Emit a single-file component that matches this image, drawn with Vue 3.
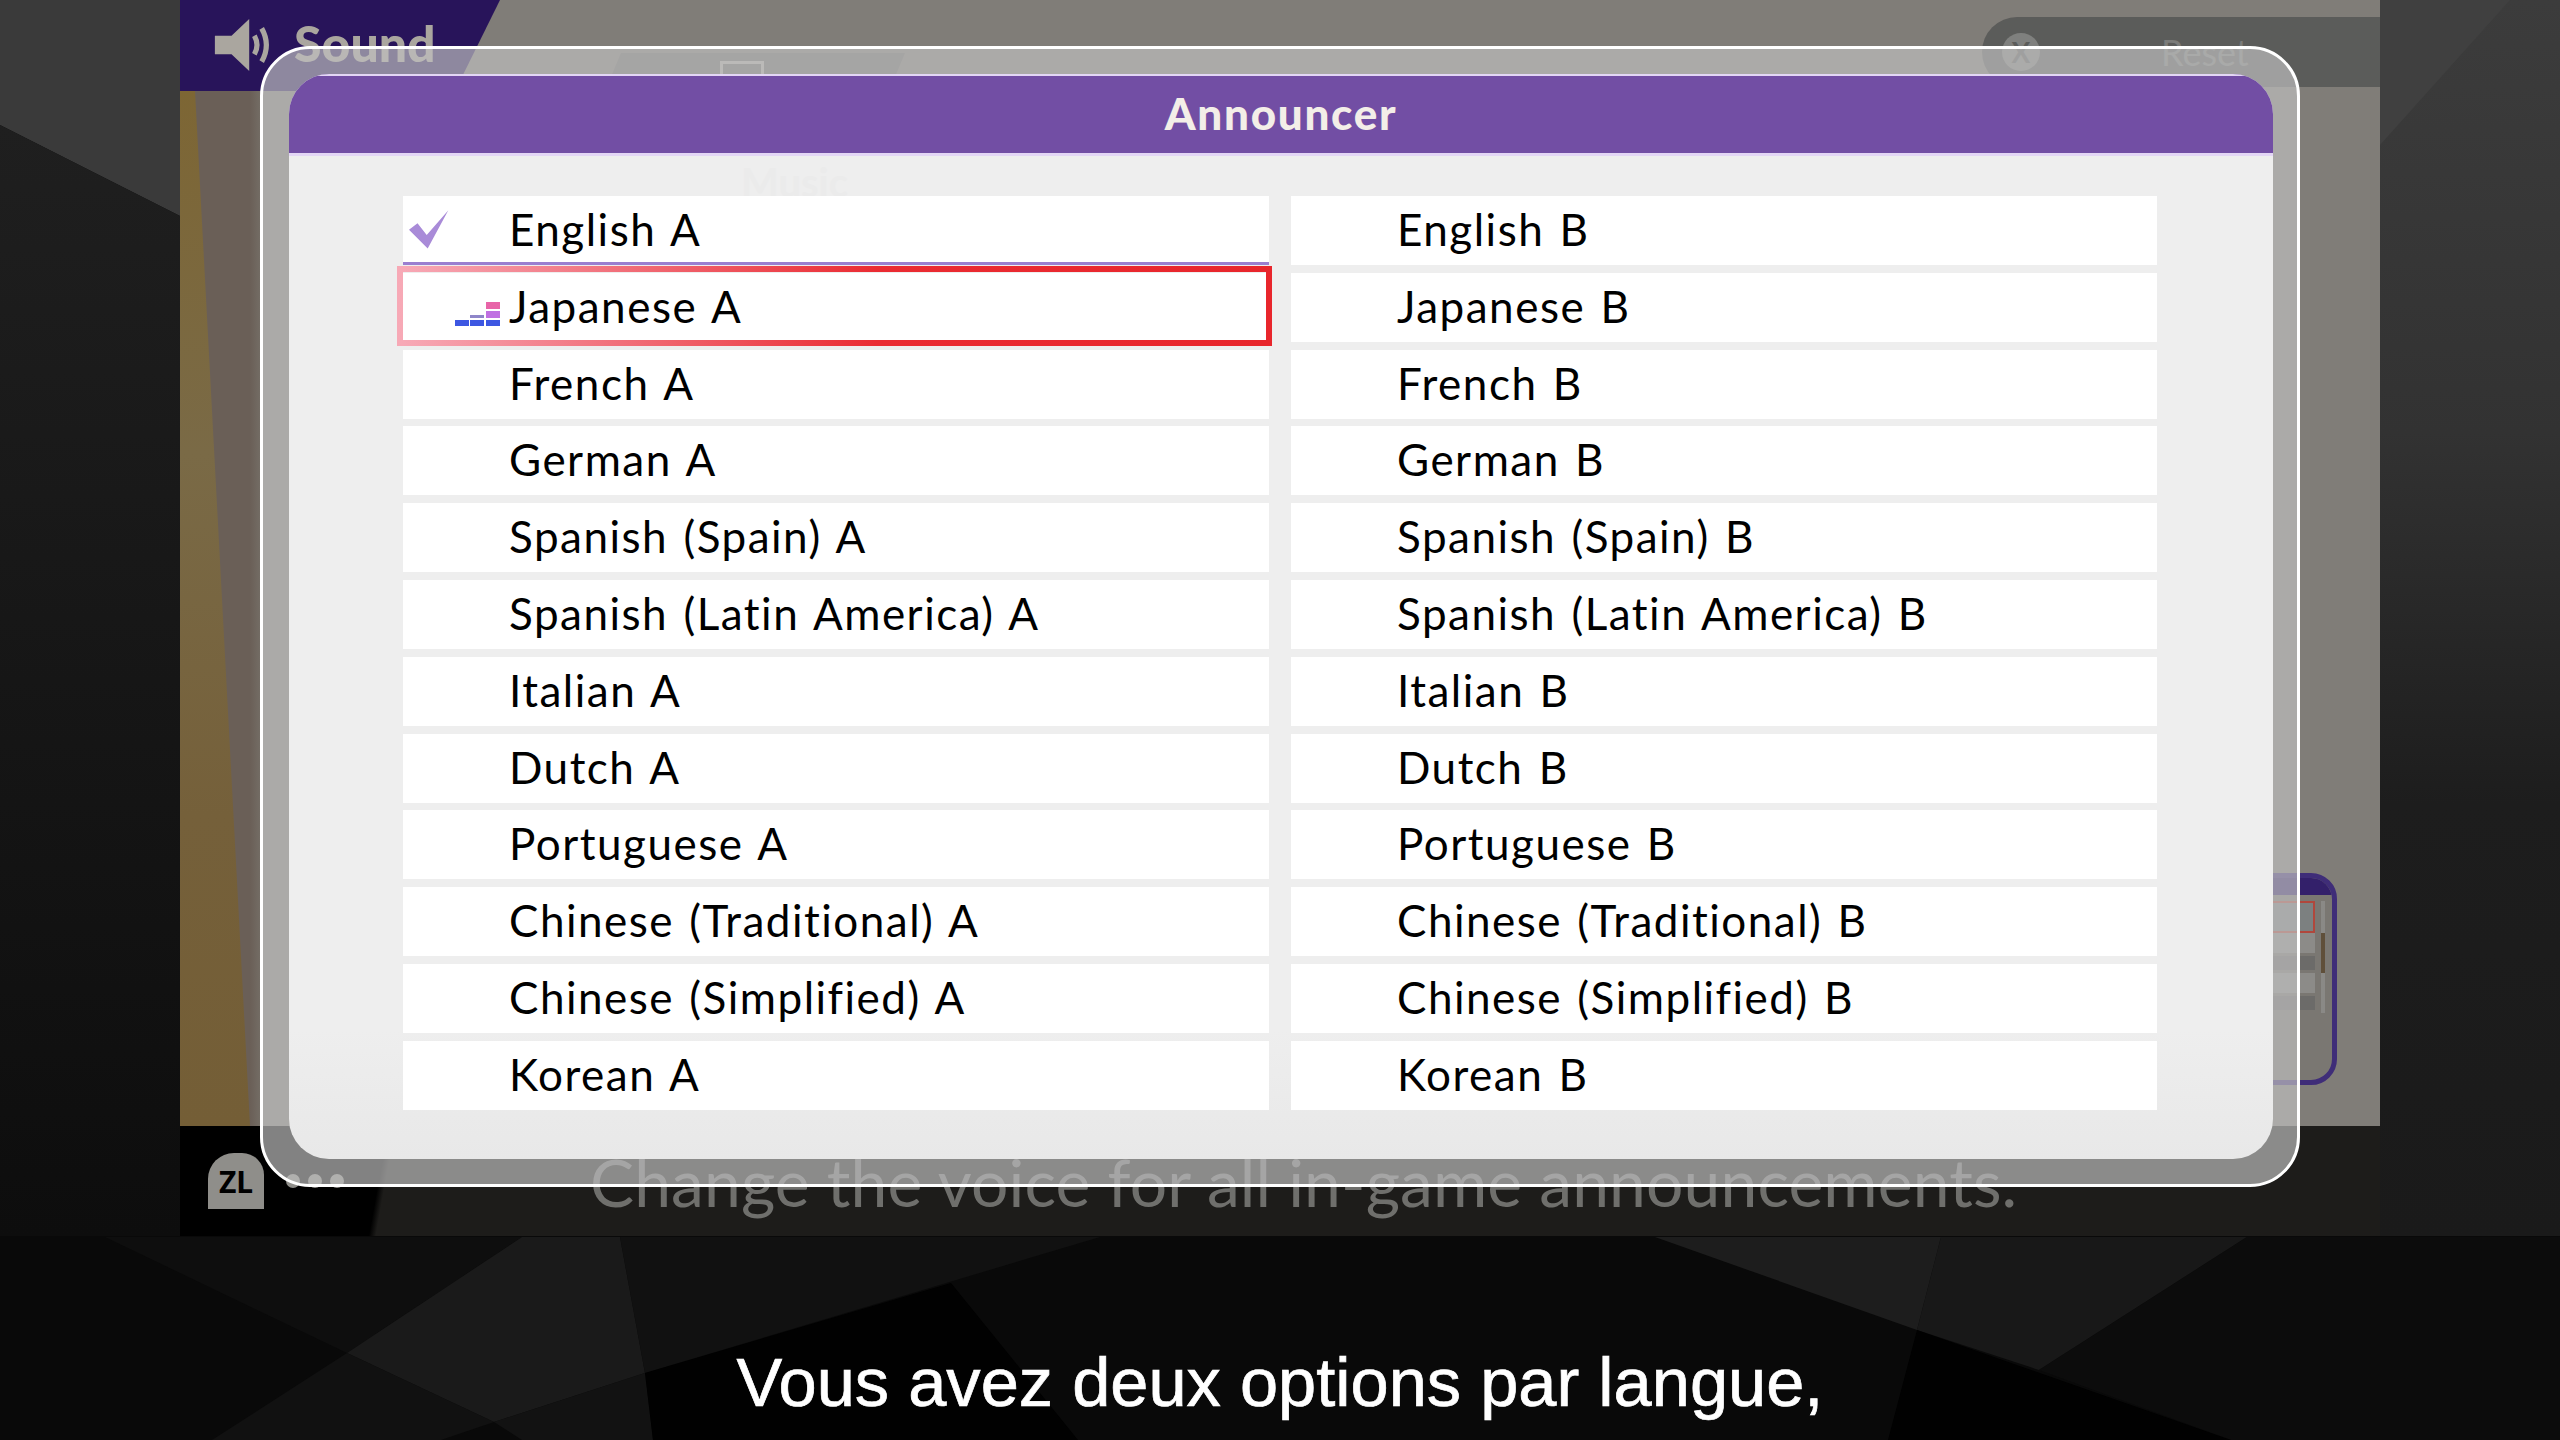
<template>
  <div class="page">
    <svg class="backdrop" viewBox="0 0 2560 1440" aria-hidden="true">
      <defs>
        <linearGradient id="leftFade" x1="0" y1="0" x2="0" y2="1">
          <stop offset="0" stop-color="#1f1f1f" />
          <stop offset="1" stop-color="#0d0d0d" />
        </linearGradient>
        <linearGradient id="rightFade" x1="0" y1="0" x2="0" y2="1">
          <stop offset="0" stop-color="#3c3c3c" />
          <stop offset="0.35" stop-color="#323232" />
          <stop offset="0.65" stop-color="#1d1d1d" />
          <stop offset="1" stop-color="#1a1a1a" />
        </linearGradient>
      </defs>
      <rect width="2560" height="1440" fill="#090909" />
      <polygon points="0,0 180,0 180,216 0,125" fill="#3a3a3a" />
      <polygon points="0,125 180,216 180,1236 0,1236" fill="url(#leftFade)" />
      <rect x="2380" y="0" width="180" height="1236" fill="url(#rightFade)" />
      <polygon points="2380,0 2510,0 2380,145" fill="#404040" />
      <!-- bottom facets -->
      <polygon points="105,1237 522,1237 347,1353" fill="#0e0e0e" />
      <polygon points="522,1237 620,1237 645,1373 494,1422 347,1353" fill="#1a1a1a" />
      <polygon points="620,1237 1100,1237 645,1373" fill="#111111" />
      <polygon points="347,1353 494,1422 441,1440 212,1440" fill="#111111" />
      <polygon points="494,1422 645,1373 653,1440 522,1440" fill="#121212" />
      <polygon points="645,1373 951,1283 1078,1440 653,1440" fill="#010101" />
      <polygon points="1655,1237 1941,1237 1917,1330" fill="#1d1d1d" />
      <polygon points="1941,1237 2247,1237 2039,1370 1917,1330" fill="#181818" />
      <polygon points="2247,1237 2560,1237 2560,1440 2231,1440 2039,1370" fill="#0c0c0c" />
      <polygon points="1917,1330 2231,1440 1888,1440" fill="#010101" />
    </svg>

    <div class="screen">
      <header class="top">
        <div class="brand">
          <svg class="speaker" viewBox="0 0 56 50">
            <path d="M0 16h16L33 0v50L16 34H0z" />
            <path d="M38 16q5 9 0 18M45 9q9 16 0 32" class="waves" />
          </svg>
          <span>Sound</span>
        </div>
        <div class="ghost-tab"><i></i></div>
        <div class="reset">
          <span class="x-button">X</span>
          <span class="reset-label">Reset</span>
        </div>
      </header>

      <div class="stage">
        <div class="wood"></div>
        <div class="mini">
          <div class="mini-head"></div>
          <div class="mini-body">
            <div class="mini-rows">
              <div class="mini-row active"></div>
              <div class="mini-row"></div>
              <div class="mini-row shade"></div>
              <div class="mini-row"></div>
              <div class="mini-row shade"></div>
            </div>
            <div class="mini-scroll"><i></i></div>
          </div>
        </div>
      </div>

      <footer class="bottom">
        <div class="zl">ZL</div>
        <div class="dots"><i></i><i></i><i></i></div>
        <p class="hint">Change the voice for all in-game announcements.</p>
      </footer>
    </div>

    <p class="caption">Vous avez deux options par langue,</p>

    <div class="dialog">
      <div class="panel">
        <h1 class="title">Announcer</h1>
        <div class="ghost-label">Music</div>
        <div class="list">
          <div
            v-for="item in items"
            :key="item.label"
            class="row"
            :class="{ checked: item.checked, focused: item.focused }"
          >
            <div class="mark">
              <svg v-if="item.checked" class="check" viewBox="0 0 122 118">
                <path d="M0 60L26 40 54 76 120 0 57 117z" />
              </svg>
              <svg v-if="item.focused" class="bars" viewBox="0 0 45 24">
                <rect x="0" y="18" width="14" height="6" fill="#3d57e2" />
                <rect x="15" y="18" width="14" height="6" fill="#3d57e2" />
                <rect x="31" y="18" width="14" height="6" fill="#3d57e2" />
                <rect x="15" y="13" width="14" height="3" fill="#8f86c9" />
                <rect x="31" y="9" width="14" height="7" fill="#c070e2" />
                <rect x="31" y="0" width="14" height="7" fill="#e864a8" />
              </svg>
            </div>
            <span class="label">{{ item.label }}</span>
          </div>
        </div>
      </div>
    </div>
  </div>
</template>

<script setup>
const languages = [
  'English',
  'Japanese',
  'French',
  'German',
  'Spanish (Spain)',
  'Spanish (Latin America)',
  'Italian',
  'Dutch',
  'Portuguese',
  'Chinese (Traditional)',
  'Chinese (Simplified)',
  'Korean'
];

// the grid fills row by row, so A and B alternate
const items = languages.flatMap((name) => [
  { label: `${name} A`, checked: name === 'English', focused: name === 'Japanese' },
  { label: `${name} B`, checked: false, focused: false }
]);
</script>

<style>
html,
body {
  margin: 0;
  background: #0a0a0a;
}
</style>

<style scoped>
.page {
  position: relative;
  width: 2560px;
  height: 1440px;
  overflow: hidden;
  font-family: Lato, "Noto Sans", sans-serif;
}

.backdrop {
  position: absolute;
  inset: 0;
  width: 2560px;
  height: 1440px;
}

.screen {
  position: relative;
  display: flex;
  flex-direction: column;
  width: 2200px;
  height: 1236px;
  margin-left: 180px;
  background: #807d78;
}

.top {
  position: relative;
  display: flex;
  justify-content: space-between;
  height: 91px;
  flex: none;
}

.brand {
  display: flex;
  align-items: flex-start;
  gap: 20px;
  width: 320px;
  height: 91px;
  padding: 19px 0 0 34px;
  box-sizing: border-box;
  background: #28145a;
  clip-path: polygon(0 0, 100% 0, 275px 100%, 0 100%);
  color: #aaa69f;
  font-size: 50px;
  font-weight: 900;
  line-height: 48px;
}

.speaker {
  width: 60px;
  height: 52px;
  fill: #aaa69f;
}

.waves {
  fill: none;
  stroke: #aaa69f;
  stroke-width: 5;
}

.ghost-tab {
  position: absolute;
  left: 425px;
  top: 53px;
  width: 300px;
  height: 38px;
  background: #6f6d69;
  clip-path: polygon(16px 0, 100% 0, 284px 100%, 0 100%);
}

.ghost-tab i {
  position: absolute;
  left: 115px;
  top: 8px;
  width: 44px;
  height: 30px;
  border: 3px solid #b0aea8;
  box-sizing: border-box;
}

.reset {
  display: flex;
  align-items: center;
  gap: 121px;
  width: 398px;
  height: 70px;
  margin-top: 17px;
  padding-left: 20px;
  box-sizing: border-box;
  border-radius: 35px 0 0 35px;
  background: #5b5c5a;
}

.x-button {
  display: flex;
  align-items: center;
  justify-content: center;
  width: 38px;
  height: 38px;
  border-radius: 50%;
  background: #7f807e;
  color: #5b5c5a;
  font-size: 28px;
  font-weight: 700;
}

.reset-label {
  color: #7b7c7a;
  font-size: 36px;
}

.stage {
  position: relative;
  flex: 1;
}

/* wooden wedge running down the left edge of the game screen */
.wood {
  position: relative;
  width: 80px;
  height: 100%;
  background: linear-gradient(90deg, #6a5f57 0, #6a5f57 70px, #736c64 80px);
}

.wood::before {
  content: "";
  position: absolute;
  inset: 0;
  background: linear-gradient(180deg, #7d6634 0, #7a6a46 35%, #75603a 70%, #745e36 100%);
  clip-path: polygon(0 0, 15px 0, 70px 100%, 0 100%);
}

.mini {
  position: absolute;
  left: 1960px;
  top: 782px;
  width: 197px;
  height: 212px;
  box-sizing: border-box;
  border: 5px solid #3f2d78;
  border-radius: 26px;
  overflow: hidden;
  background: #7a7772;
}

.mini-head {
  height: 17px;
  background: #33206a;
}

.mini-body {
  display: flex;
  gap: 6px;
  height: 112px;
  margin-top: 6px;
}

.mini-rows {
  display: flex;
  flex-direction: column;
  gap: 0;
  width: 170px;
}

.mini-row {
  height: 21px;
  background: #8c8b88;
}

.mini-row.active {
  height: 33px;
  border: 2px solid #b0473c;
  box-sizing: border-box;
  background: #7c8080;
}

.mini-row.shade {
  background: #6c6b69;
  height: 14px;
  margin: 3px 0;
}

.mini-scroll {
  position: relative;
  width: 4px;
  background: #8a8986;
}

.mini-scroll i {
  position: absolute;
  left: 0;
  top: 32px;
  width: 4px;
  height: 40px;
  background: #5f4f3a;
}

.bottom {
  position: relative;
  display: flex;
  align-items: center;
  height: 110px;
  flex: none;
  background: linear-gradient(100deg, #000 0, #000 205px, #1d1c1a 212px);
}

.zl {
  display: flex;
  align-items: center;
  justify-content: center;
  width: 56px;
  height: 56px;
  margin-left: 28px;
  border-radius: 26px 22px 0 0;
  background: #8f8e8a;
  color: #000;
  font-size: 30px;
  font-weight: 700;
  font-family: "Noto Sans", sans-serif;
}

.dots {
  display: flex;
  gap: 8px;
  margin-left: 22px;
}

.dots i {
  width: 14px;
  height: 14px;
  border-radius: 50%;
  background: #8f8e8a;
}

.hint {
  margin: 0 0 0 246px;
  color: #6f6f6c;
  font-size: 66px;
  letter-spacing: 0.1px;
  white-space: nowrap;
}

.caption {
  position: relative;
  margin: 0;
  padding-top: 105px;
  color: #fff;
  font-family: "Liberation Sans", sans-serif;
  font-size: 68.6px;
  line-height: 84px;
  text-align: center;
  -webkit-text-stroke: 0.7px #fff;
}

.dialog {
  position: absolute;
  left: 260px;
  top: 46px;
  width: 2040px;
  height: 1141px;
  padding: 25px 24px 25px 26px;
  box-sizing: border-box;
  border: 3px solid #fff;
  border-radius: 50px;
  background: rgba(192, 192, 192, 0.68);
}

.panel {
  position: relative;
  display: flex;
  flex-direction: column;
  height: 100%;
  overflow: hidden;
  border-radius: 40px;
  background: linear-gradient(180deg, #eeeeee 0, #eeeeee 88%, #e8e8e8 100%);
}

.title {
  flex: none;
  height: 82px;
  margin: 0;
  box-sizing: border-box;
  border-top: 2px solid #e3d6f5;
  border-bottom: 3px solid #e3d6f5;
  background: #724ea4;
  color: #f3eee8;
  font-size: 44px;
  font-weight: 900;
  letter-spacing: 1.7px;
  line-height: 75px;
  text-align: center;
}

.ghost-label {
  position: absolute;
  left: 452px;
  top: 84px;
  color: #ebebeb;
  font-size: 40px;
  font-weight: 700;
}

.list {
  position: relative;
  display: grid;
  grid-template-columns: 866px 866px;
  grid-auto-rows: 69px;
  column-gap: 22px;
  row-gap: 7.8px;
  margin: 40px 0 0 114px;
}

.row {
  position: relative;
  display: flex;
  align-items: center;
  background: #fff;
  color: #000;
  font-size: 44px;
  letter-spacing: 1.5px;
  word-spacing: 2.5px;
  white-space: nowrap;
}

.label {
  padding-bottom: 3px;
}

.row.checked {
  box-shadow: inset 0 -3px 0 #9a7fd0;
}

.row.focused::after {
  content: "";
  position: absolute;
  left: -6px;
  right: -3px;
  top: -7px;
  bottom: -4px;
  border: 6px solid;
  border-image: linear-gradient(90deg, #f7a9b6, #ea2b32 55%, #e8262c) 1;
}

.mark {
  position: relative;
  width: 106px;
  height: 100%;
  flex: none;
}

.check {
  position: absolute;
  left: 6px;
  top: 14px;
  width: 40px;
  height: 39px;
  fill: #a98bd8;
}

.bars {
  position: absolute;
  left: 52px;
  top: 29px;
  width: 45px;
  height: 24px;
}
</style>
